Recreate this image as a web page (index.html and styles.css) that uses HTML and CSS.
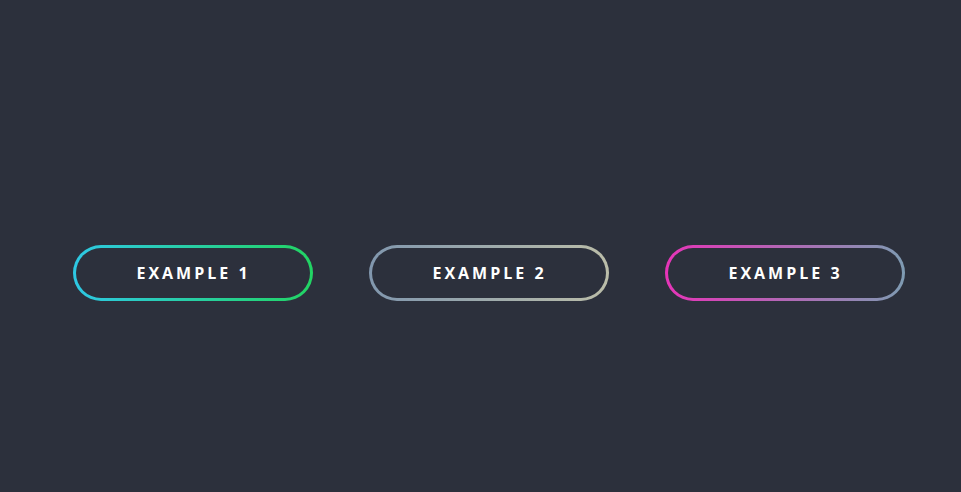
FILE: index.html
```html
<!DOCTYPE html>
<html>
<head>
<meta charset="utf-8">
<link rel="stylesheet" href="styles.css">
</head>
<body>
<div class="row">
  <button class="btn btn-1">Example 1</button>
  <button class="btn btn-2">Example 2</button>
  <button class="btn btn-3">Example 3</button>
</div>
</body>
</html>
```
FILE: styles.css
```css
html, body {
  margin: 0;
  height: 100%;
  background: #2c303c;
}
.row {
  display: flex;
  gap: 56px;
  padding: 245px 0 0 73px;
}
.btn {
  width: 240px;
  height: 56px;
  border: 3px solid transparent;
  border-radius: 28px;
  color: #ffffff;
  font-family: "Open Sans", sans-serif;
  font-weight: 700;
  font-size: 16px;
  letter-spacing: 3px;
  text-transform: uppercase;
  padding: 0 0 0 1px;
  cursor: pointer;
}
.btn-1 {
  background: linear-gradient(#2c303c, #2c303c) padding-box,
              linear-gradient(to right, #2ec8e4, #22d463) border-box;
}
.btn-2 {
  background: linear-gradient(#2c303c, #2c303c) padding-box,
              linear-gradient(to right, #8197ae, #bbbda9) border-box;
}
.btn-3 {
  background: linear-gradient(#2c303c, #2c303c) padding-box,
              linear-gradient(to right, #e634b8, #7e9bb2) border-box;
}
```
